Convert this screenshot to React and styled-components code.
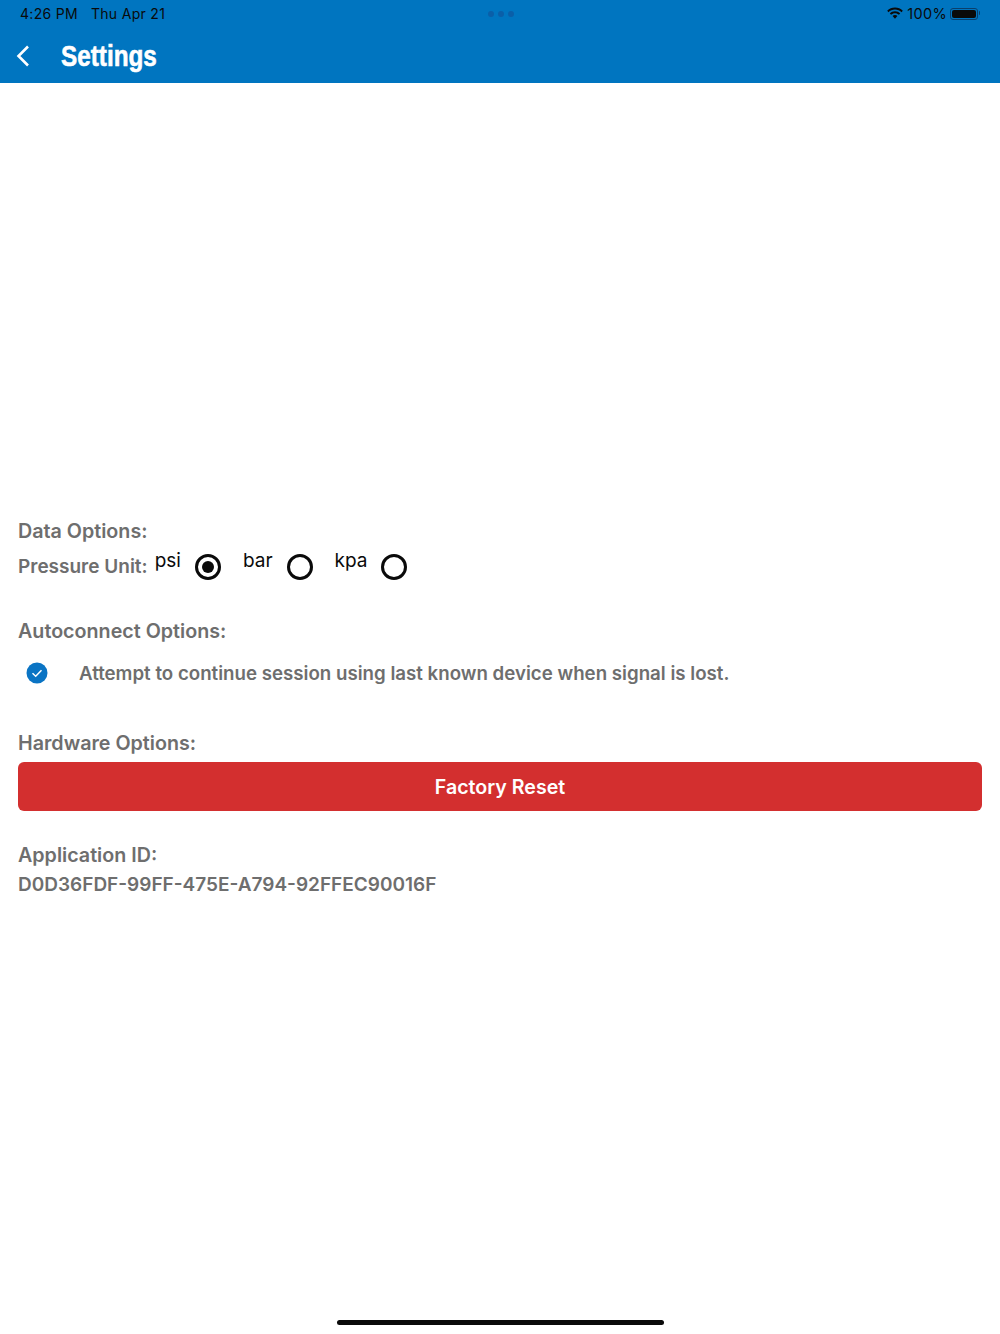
import React from "react";
import styled, { createGlobalStyle } from "styled-components";

const GlobalStyle = createGlobalStyle`
  html, body {
    margin: 0;
    padding: 0;
    background: #fff;
  }
  body {
    font-family: "Inter", "Liberation Sans", sans-serif;
  }
`;

const App = () => {
  return (
    <Page>
      <GlobalStyle />
      <Header>
        <StatusBar>
          <StatusLeft>
            <span>4:26 PM</span>
            <span>Thu Apr 21</span>
          </StatusLeft>
          <Dots>
            <Dot />
            <Dot />
            <Dot />
          </Dots>
          <StatusRight>
            <svg width="18" height="13" viewBox="0 0 18 13">
              <path d="M9 2.600c2.500 0 4.800 1 6.500 2.600l1.300-1.400C14.700 1.800 12 .6 9 .6S3.300 1.800 1.200 3.800l1.300 1.400C4.200 3.600 6.500 2.600 9 2.600z" fill="#0a0a0a" />
              <path d="M9 6.200c1.500 0 2.900.6 3.900 1.600l1.300-1.400C12.800 5 11 4.200 9 4.200S5.200 5 3.800 6.400l1.300 1.400c1-1 2.400-1.600 3.900-1.600z" fill="#0a0a0a" />
              <path d="M9 8c-1 0-1.800.4-2.400 1L9 11.800 11.400 9C10.800 8.400 10 8 9 8z" fill="#0a0a0a" />
            </svg>
            <Percent>100%</Percent>
            <Battery>
              <BatteryFill />
            </Battery>
          </StatusRight>
        </StatusBar>
        <NavBar>
          <svg width="16" height="24" viewBox="0 0 16 24">
            <path d="M13 2.500 3.500 12 13 21.500" fill="none" stroke="#fff" strokeWidth="2.600" />
          </svg>
          <Title>Settings</Title>
        </NavBar>
      </Header>

      <Content>
        <Heading>Data Options:</Heading>
        <UnitRow>
          <Label>Pressure Unit:</Label>
          <UnitList>
            <UnitOption>
              <UnitName>psi</UnitName>
              <Radio $checked />
            </UnitOption>
            <UnitOption>
              <UnitName>bar</UnitName>
              <Radio />
            </UnitOption>
            <UnitOption>
              <UnitName>kpa</UnitName>
              <Radio />
            </UnitOption>
          </UnitList>
        </UnitRow>

        <AutoHeading>Autoconnect Options:</AutoHeading>
        <CheckRow>
          <svg width="22" height="22" viewBox="0 0 22 22">
            <circle cx="11" cy="11" r="10.500" fill="#0a74c4" />
            <path d="M6.500 11.300 9.700 14.300 15.500 8.200" fill="none" stroke="#fff" strokeWidth="1.500" />
          </svg>
          <CheckText>Attempt to continue session using last known device when signal is lost.</CheckText>
        </CheckRow>

        <HardwareHeading>Hardware Options:</HardwareHeading>
        <ResetButton>Factory Reset</ResetButton>

        <AppHeading>Application ID:</AppHeading>
        <AppId>D0D36FDF-99FF-475E-A794-92FFEC90016F</AppId>
      </Content>

      <HomeIndicator />
    </Page>
  );
};

const Page = styled.div`
  position: relative;
  width: 1000px;
  height: 1334px;
  overflow: hidden;
  background: #fff;
`;

const Header = styled.header`
  height: 83px;
  background: #0075c0;
`;

const StatusBar = styled.div`
  box-sizing: border-box;
  height: 28px;
  padding: 0 19px 1px 20px;
  display: flex;
  align-items: center;
  justify-content: space-between;
  font-size: 14px;
  letter-spacing: 0.3px;
  color: #0a0a0a;
`;

const StatusLeft = styled.div`
  display: flex;
  gap: 13px;
  width: 300px;
`;

const Dots = styled.div`
  display: flex;
  gap: 4px;
`;

const Dot = styled.span`
  width: 6px;
  height: 6px;
  border-radius: 50%;
  background: #0a5fa8;
`;

const StatusRight = styled.div`
  display: flex;
  align-items: center;
  justify-content: flex-end;
  gap: 3px;
  width: 300px;
`;

const Percent = styled.span`
  font-size: 14.500px;
`;

const Battery = styled.div`
  position: relative;
  width: 28px;
  height: 12px;
  margin-right: 3px;
  padding: 1px;
  box-sizing: border-box;
  border: 1px solid #0a3f6b;
  border-radius: 3px;
  display: flex;

  &::after {
    content: "";
    position: absolute;
    right: -3px;
    top: 2px;
    width: 1.500px;
    height: 4px;
    border-radius: 0 1px 1px 0;
    background: #0a3f6b;
  }
`;

const BatteryFill = styled.div`
  flex: 1;
  background: #0a0a0a;
  border-radius: 2px;
`;

const NavBar = styled.div`
  height: 55px;
  padding-left: 15px;
  display: flex;
  align-items: center;
  gap: 30px;
`;

const Title = styled.h1`
  margin: 0;
  font-family: "Liberation Sans", sans-serif;
  font-size: 30px;
  font-weight: 700;
  color: #fff;
  transform: scaleX(0.81);
  transform-origin: left center;
  -webkit-text-stroke: 0.6px #fff;
`;

const Content = styled.main`
  padding: 436px 18px 0;
  color: #6e6e6e;
  font-size: 19px;
  font-weight: 600;
`;

const Heading = styled.div`
  height: 24px;
  line-height: 24px;
  font-size: 19.700px;
  font-weight: 600;
`;

const AutoHeading = styled(Heading)`
  margin-top: 34px;
`;

const HardwareHeading = styled(Heading)`
  margin-top: 46px;
`;

const AppHeading = styled(Heading)`
  margin-top: 32px;
`;

const Label = styled.span`
  margin-right: 7px;
`;

const UnitRow = styled.div`
  margin-top: 4px;
  height: 38px;
  display: flex;
  align-items: center;
`;

const UnitList = styled.div`
  display: flex;
  gap: 22px;
`;

const UnitOption = styled.div`
  display: flex;
  align-items: center;
  gap: 14px;
`;

const UnitName = styled.span`
  margin-top: -11px;
  font-size: 19px;
  font-weight: 400;
  color: #0a0a0a;
`;

const Radio = styled.span`
  width: 26px;
  height: 26px;
  margin-top: 2px;
  box-sizing: border-box;
  border: 3px solid #0a0a0a;
  border-radius: 50%;
  display: flex;
  align-items: center;
  justify-content: center;

  &::after {
    content: "";
    display: ${(props) => (props.$checked ? "block" : "none")};
    width: 12px;
    height: 12px;
    border-radius: 50%;
    background: #0a0a0a;
  }
`;

const CheckRow = styled.div`
  margin-top: 18px;
  height: 24px;
  padding-left: 8px;
  display: flex;
  align-items: center;
  gap: 31px;
`;

const CheckText = styled.span`
  font-size: 18.700px;
`;

const ResetButton = styled.button`
  display: block;
  width: 100%;
  height: 49px;
  margin-top: 7px;
  border: none;
  border-radius: 6px;
  background: #d32f2f;
  color: #fff;
  font-family: "Inter", sans-serif;
  font-size: 19.600px;
  font-weight: 600;
`;

const AppId = styled.div`
  margin-top: 6px;
`;

const HomeIndicator = styled.div`
  position: absolute;
  left: 337px;
  bottom: 9px;
  width: 327px;
  height: 5px;
  border-radius: 3px;
  background: #0a0a0a;
`;

export default App;
